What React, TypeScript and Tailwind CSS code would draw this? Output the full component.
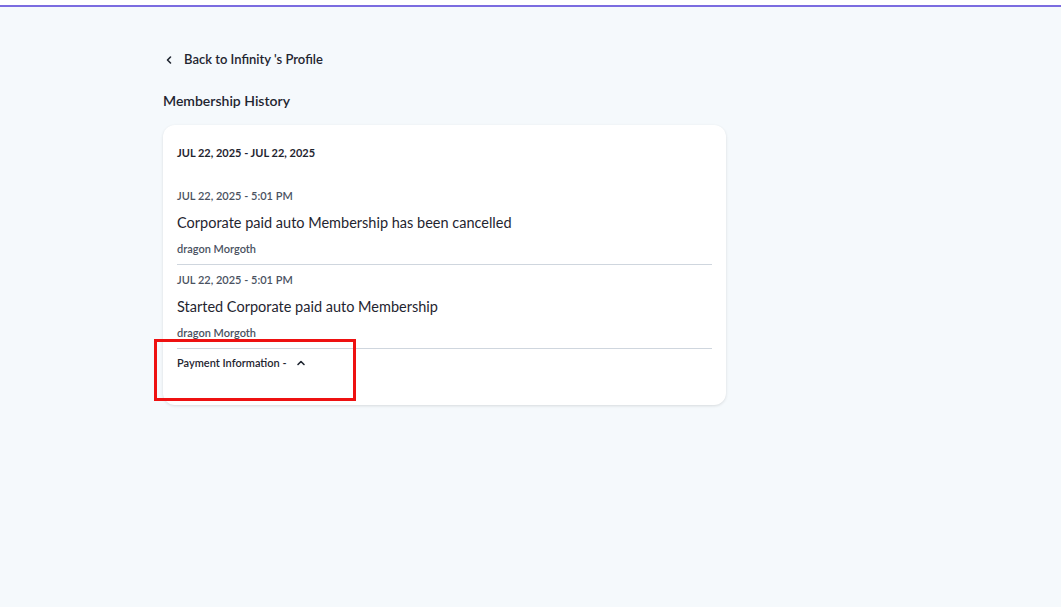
const font = { fontFamily: "Lato, 'Noto Sans', sans-serif" };

function Chevron({ up }: { up?: boolean }) {
  return (
    <svg width="10" height="10" viewBox="0 0 10 10" fill="none" stroke="currentColor" strokeWidth="1.6" strokeLinecap="round" strokeLinejoin="round">
      {up ? <path d="M2 6.5 5 3.5 8 6.5" /> : <path d="M6.5 2 3.5 5 6.5 8" />}
    </svg>
  );
}

const events = [
  { time: "JUL 22, 2025 - 5:01 PM", text: "Corporate paid auto Membership has been cancelled", by: "dragon Morgoth" },
  { time: "JUL 22, 2025 - 5:01 PM", text: "Started Corporate paid auto Membership", by: "dragon Morgoth" },
];

export default function App() {
  return (
    <div className="relative min-h-[607px] bg-[#f5f9fc] text-[#1f2530]" style={font}>
      <div className="h-[5px] bg-white" />
      <div className="h-[2px] bg-[#7b6ce0]" />
      <div className="w-[563px] ml-[163px]">
        <button className="mt-[43px] flex items-center gap-[10px] pl-[1px] text-[13px] font-semibold text-[#1f2530]">
          <Chevron />
          Back to Infinity 's Profile
        </button>
        <h1 className="mt-[20px] text-[14px] font-semibold">Membership History</h1>
        <div className="mt-[14px] rounded-xl bg-white px-[14px] pt-[20px] pb-[34px] shadow-[0_1px_3px_rgba(0,0,0,0.12)]">
          <div className="text-[11px] font-bold leading-[16px]">JUL 22, 2025 - JUL 22, 2025</div>
          <div className="mt-[27px]">
            {events.map((e, i) => (
              <div key={i} className="border-b border-[#cfd6de] pb-[7px] mb-[7px] last:mb-[6px]">
                <div className="text-[11px] font-semibold leading-[16px] text-[#4a5261]">{e.time}</div>
                <div className="mt-[10px] text-[14.5px] leading-[18px]">{e.text}</div>
                <div className="mt-[9px] text-[11px] font-semibold leading-[16px] text-[#4a5261]">{e.by}</div>
              </div>
            ))}
          </div>
          <div className="mt-[3px] flex items-center gap-[9px] text-[11px] font-semibold leading-[16px]">
            Payment Information -
            <Chevron up />
          </div>
        </div>
      </div>
      <div className="absolute left-[154px] top-[339px] h-[62px] w-[202px] border-[3px] border-[#ee1111]" />
    </div>
  );
}
